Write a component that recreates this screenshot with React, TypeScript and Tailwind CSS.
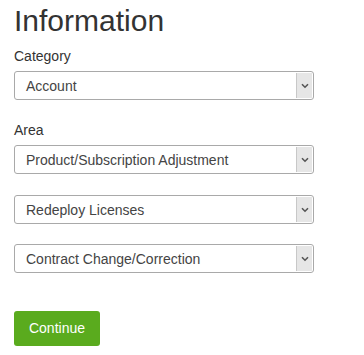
import React from "react";

function Select({ value, className = "" }: { value: string; className?: string }) {
  return (
    <div
      className={`relative flex h-[29px] w-[300px] items-center rounded-[3px] border border-[#a9a9a9] bg-white ${className}`}
    >
      <span className="flex-1 pl-[11px] text-[14px] leading-[20px] text-[#444]">{value}</span>
      <div className="mr-px flex h-[25px] w-[16px] items-center justify-center border-l border-[#c8c8c8] bg-[#e6e6e6]">
        <svg width="8" height="6" viewBox="0 0 8 6">
          <path d="M1 1.2 L4 4.2 L7 1.2" stroke="#555" strokeWidth="1.6" fill="none" />
        </svg>
      </div>
    </div>
  );
}

export default function App() {
  return (
    <div
      className="flex w-[364px] h-[355px] flex-col bg-white pl-[14px] text-[#333]"
      style={{ fontFamily: '"Liberation Sans", Arial, sans-serif' }}
    >
      <h1 className="mt-[4px] text-[30px] leading-[33px] font-normal text-[#333]">Information</h1>
      <label className="mt-[9px] text-[14px] leading-[20px]">Category</label>
      <Select value="Account" className="mt-[5px]" />
      <label className="mt-[20px] text-[14px] leading-[20px]">Area</label>
      <Select value="Product/Subscription Adjustment" className="mt-[5px]" />
      <Select value="Redeploy Licenses" className="mt-[21px]" />
      <Select value="Contract Change/Correction" className="mt-[20px]" />
      <button className="mt-[38px] h-[35px] w-[86px] rounded-[3px] bg-[#5aab1e] text-[14px] text-white">
        Continue
      </button>
    </div>
  );
}
